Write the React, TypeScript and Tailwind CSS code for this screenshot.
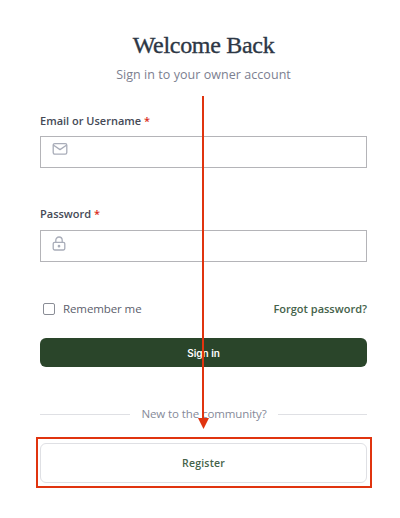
import React from "react";

function Mail() {
  return (
    <svg width="16" height="14" viewBox="0 0 16 14" fill="none" stroke="#a9adb9" strokeWidth="1.3" strokeLinejoin="round" strokeLinecap="round">
      <rect x="1.2" y="1.6" width="13.6" height="10.6" rx="1.6" />
      <path d="M1.6 3.2 8 7.6l6.4-4.4" />
    </svg>
  );
}

function Lock() {
  return (
    <svg width="14" height="15" viewBox="0 0 14 15" fill="none" stroke="#a9adb9" strokeWidth="1.3" strokeLinecap="round">
      <rect x="1.2" y="6.4" width="11.6" height="7.6" rx="1.4" />
      <path d="M3.8 6.4V4.2a3.2 3.2 0 0 1 6.4 0v2.2" />
      <circle cx="7" cy="10.2" r="0.7" fill="#a9adb9" />
    </svg>
  );
}

function Field({ label, icon, className, labelClass }: { label: string; icon: React.ReactNode; className?: string; labelClass?: string }) {
  return (
    <div className={className}>
      <div className={"h-[16px] text-[11px] leading-[16px] font-semibold text-[#454a56] font-['Open_Sans',sans-serif] " + (labelClass ?? "")}>
        {label} <span className="text-[#d92d20]">*</span>
      </div>
      <div className="mt-[8px] h-[32px] border border-[#b4b4b8] pl-[11px] pt-[5px] bg-white">{icon}</div>
    </div>
  );
}

export default function App() {
  return (
    <div className="relative w-[400px] h-[518px] bg-white overflow-hidden pl-[40px] pr-[33px] pt-[30px] font-['Open_Sans',sans-serif]">
      <h1 className="text-center h-[30px] text-[24px] leading-[30px] font-normal tracking-[-0.3px] [-webkit-text-stroke:0.35px_#2d3745] text-[#2d3745] font-['Liberation_Serif',serif]">
        Welcome Back
      </h1>
      <p className="mt-[6px] text-center h-[18px] text-[12.5px] leading-[18px] tracking-[0.05px] text-[#7c8090]">
        Sign in to your owner account
      </p>

      <Field className="mt-[28px]" labelClass="pt-[1px]" label="Email or Username" icon={<Mail />} />
      <Field className="mt-[38px]" label="Password" icon={<Lock />} />

      <div className="mt-[37px] h-[20px] flex items-center justify-between">
        <label className="flex items-center gap-[8px] pl-[3px] text-[11.5px] tracking-[-0.1px] text-[#5c606c]">
          <span className="w-[12px] h-[12px] border border-[#8a8d96] rounded-[2px] bg-white" />
          Remember me
        </label>
        <span className="text-[11px] font-semibold text-[#44624a]">Forgot password?</span>
      </div>

      <button className="mt-[19px] block w-full h-[29px] pt-[1px] rounded-[6px] bg-[#2a452a] text-white text-[10px] font-semibold font-['Inter',sans-serif]">
        Sign in
      </button>

      <div className="mt-[38px] h-[18px] flex items-center">
        <div className="w-[90px] h-px bg-[#dfe0e4]" />
        <span className="flex-1 text-center text-[11.5px] tracking-[-0.1px] text-[#868a99]">New to the community?</span>
        <div className="w-[89px] h-px bg-[#dfe0e4]" />
      </div>

      <button className="mt-[20px] block w-full h-[40px] pt-[1px] rounded-[6px] bg-white border border-[#dfe0e4] text-[10.5px] font-semibold tracking-[0.2px] text-[#44624a]">
        Register
      </button>

      {/* annotation overlay */}
      <div className="absolute left-[36px] top-[437px] w-[336px] h-[51px] border-2 border-[#e0340f]" />
      <div className="absolute left-[202px] top-[96px] w-[2px] h-[324px] bg-[#e0340f]" />
      <svg className="absolute left-[198px] top-[418px]" width="11" height="12" viewBox="0 0 11 12">
        <path d="M0 0h11L5.5 11z" fill="#e0340f" />
      </svg>
    </div>
  );
}
